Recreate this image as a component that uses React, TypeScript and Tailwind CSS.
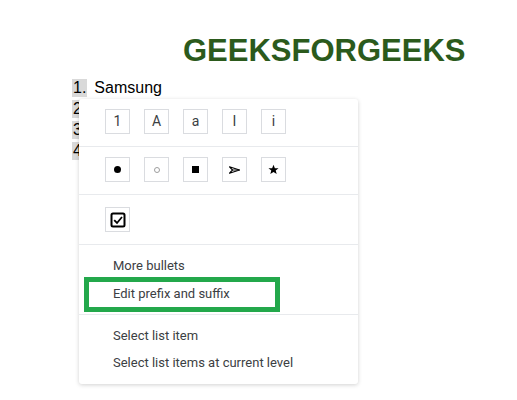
import { ReactNode } from 'react';

function Box({ children }: { children: ReactNode }) {
  return (
    <div className="w-[25px] h-[25px] border border-[#dadce0] flex items-center justify-center text-[14px] text-[#3c4043]">
      {children}
    </div>
  );
}

function Divider() {
  return <div className="h-px bg-[#e8eaed]" />;
}

export default function App() {
  const numbers = ['1', 'A', 'a', 'I', 'i'];

  return (
    <div className="relative w-[517px] h-[400px] bg-white overflow-hidden font-['Liberation_Sans',Arial,sans-serif]">
      <h1 className="pl-[183px] pt-[33px] text-[31px] leading-[36px] font-bold text-[#2b5a1c]">GEEKSFORGEEKS</h1>

      <div className="pl-[72px] pt-[10px] flex flex-col text-[16px] leading-[18px] text-black">
        <div className="flex gap-[7px]">
          <span className="bg-[#d9d9d9] px-[1px]">1.</span>
          <span>Samsung</span>
        </div>
        <div className="mt-[3px] flex"><span className="bg-[#d9d9d9] px-[1px]">2.</span></div>
        <div className="mt-[3px] flex"><span className="bg-[#d9d9d9] px-[1px]">3.</span></div>
        <div className="mt-[3px] flex"><span className="bg-[#d9d9d9] px-[1px]">4.</span></div>
      </div>

      {/* context menu */}
      <div className="absolute left-[79px] top-[99px] w-[279px] h-[285px] bg-white rounded-[3px] shadow-[0_1px_4px_rgba(0,0,0,0.18)] font-['Roboto',Arial,sans-serif] flex flex-col">
        <div className="h-[47px] pl-[26px] pt-[10px] flex gap-[14px]">
          {numbers.map((n) => (
            <Box key={n}>{n}</Box>
          ))}
        </div>
        <Divider />
        <div className="h-[47px] pl-[26px] pt-[10px] flex gap-[14px]">
          <Box>
            <span className="w-[7px] h-[7px] rounded-full bg-black" />
          </Box>
          <Box>
            <span className="w-[6px] h-[6px] rounded-full border border-[#9e9e9e]" />
          </Box>
          <Box>
            <span className="w-[7px] h-[7px] bg-black" />
          </Box>
          <Box>
            <svg width="11" height="8" viewBox="0 0 11 8">
              <path d="M0.5 0.8 L10.5 4 L0.5 7.2 L3.5 4 Z" fill="none" stroke="#000" strokeWidth="1.1" strokeLinejoin="round" />
              <path d="M3.5 4 L10.5 4" stroke="#000" strokeWidth="0.9" />
            </svg>
          </Box>
          <Box>
            <svg width="11" height="11" viewBox="0 0 24 24">
              <path d="M12 1.5 L15 9 L23 9.3 L16.8 14.3 L19 22 L12 17.5 L5 22 L7.2 14.3 L1 9.3 L9 9 Z" fill="#000" />
            </svg>
          </Box>
        </div>
        <Divider />
        <div className="h-[49px] pl-[26px] pt-[12px] flex">
          <Box>
            <svg width="16" height="16" viewBox="0 0 16 16">
              <rect x="1.5" y="1.5" width="13" height="13" rx="1.5" fill="none" stroke="#000" strokeWidth="2" />
              <path d="M4.2 8.2 L7 11 L12 5" fill="none" stroke="#000" strokeWidth="1.8" />
            </svg>
          </Box>
        </div>
        <Divider />
        <div className="h-[69px] pl-[34px] pt-[11px] flex flex-col text-[13px] text-[#3c4043]">
          <div className="h-[20px] leading-[20px]">More bullets</div>
          <div className="h-[20px] leading-[20px] mt-[8px]">Edit prefix and suffix</div>
        </div>
        <Divider />
        <div className="pl-[34px] pt-[11px] flex flex-col text-[13px] text-[#3c4043]">
          <div className="h-[20px] leading-[20px]">Select list item</div>
          <div className="h-[20px] leading-[20px] mt-[7px]">Select list items at current level</div>
        </div>

        {/* highlight annotation */}
        <div className="absolute left-[5px] top-[178px] w-[196px] h-[35px] border-[5px] border-[#23a84b]" />
      </div>
    </div>
  );
}
